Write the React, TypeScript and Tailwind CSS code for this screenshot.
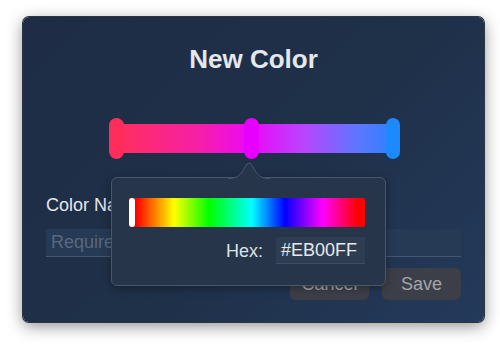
import React from 'react';

const font = { fontFamily: '"Liberation Sans", Arial, sans-serif' };

function GradientSlider() {
  return (
    <div className="relative mx-auto mt-[44px] h-[41px] w-[290px]">
      {/* track */}
      <div className="absolute left-[7px] right-[6px] top-[6px] h-[29px] rounded-[3px] bg-[linear-gradient(to_right,#ff2f5a_0%,#f61fa8_30%,#ec08f8_49%,#b845ff_68%,#5a78ff_88%,#2f80ff_100%)]" />
      {/* stops */}
      <div className="absolute left-0 top-0 h-[41px] w-[15px] rounded-full bg-[#ff2d5c]" />
      <div className="absolute left-[135px] top-0 h-[41px] w-[15px] rounded-full bg-[#e700ff]" />
      <div className="absolute left-[277px] top-0 h-[41px] w-[14px] rounded-full bg-[#1b8aff]" />
    </div>
  );
}

function HexPopover() {
  return (
    <div className="absolute left-[88px] top-[160px] w-[275px] rounded-[6px] border border-[#4b5669] bg-[#27354a] pb-[21px] pl-[17px] pr-[20px] pt-[20px] shadow-[0_2px_8px_rgba(0,0,0,0.35)]">
      {/* arrow */}
      <svg
        className="absolute left-[116px] top-[-18px]"
        width="42"
        height="19"
        viewBox="0 0 42 19"
      >
        <path d="M0 19 C9 19 13 15 17 7 Q21 -1 25 7 C29 15 33 19 42 19 Z" fill="#27354a" />
        <path d="M0 18.5 C9 18.5 13 15 17 7 Q21 -1 25 7 C29 15 33 18.5 42 18.5" fill="none" stroke="#4b5669" strokeWidth="1" />
      </svg>

      {/* hue strip */}
      <div className="relative h-[29px] rounded-[2px] bg-[linear-gradient(to_right,#ff0000_0%,#ff0000_3%,#ffff00_19%,#00ff00_34%,#00ffff_52%,#0000ff_66%,#ff00ff_82%,#ff0000_97%,#ff0000_100%)]">
        <div className="absolute left-0 top-0 h-[29px] w-[6px] rounded-[3px] bg-white" />
      </div>

      {/* hex field */}
      <div className="mt-[10px] flex items-center justify-end gap-[13px]">
        <span className="text-[18px] leading-6 text-[#dde1e7]">Hex:</span>
        <div className="flex h-[27px] w-[89px] items-center border-b border-[#3f4c61] bg-[#2f3d53] pl-[5px] text-[18px] text-[#e6e9ee]">
          #EB00FF
        </div>
      </div>
    </div>
  );
}

export default function App() {
  return (
    <div className="h-[345px] w-[500px] bg-white pl-[23px] pt-[17px]" style={font}>
      <div className="relative flex h-[305px] w-[461px] flex-col rounded-[6px] bg-[linear-gradient(135deg,#1e2d45_0%,#1f3049_55%,#243a5b_100%)] px-[23px] pb-[22px] pt-[27px] shadow-[0_0_0_1px_#2d3542,0_4px_16px_rgba(0,0,0,0.45)]">
        <h1 className="text-center text-[26px] font-bold leading-[30px] text-[#e4e7ec]">New Color</h1>

        <GradientSlider />

        <label className="mt-[35px] text-[18px] leading-6 text-[#e5e7eb]">Color Name</label>
        <div className="mt-[12px] flex h-[28px] items-center border-b border-[#46566e] bg-[#273a55] pl-[5px] text-[18px] text-[#57687f]">
          Required
        </div>

        <div className="mt-[11px] flex justify-end gap-[13px]">
          <button className="h-[32px] w-[79px] rounded-[6px] bg-[#3c3f47] text-[18px] text-[#a3a5aa]">Cancel</button>
          <button className="h-[32px] w-[79px] rounded-[6px] bg-[#3c3f47] text-[18px] text-[#a3a5aa]">Save</button>
        </div>

        <HexPopover />
      </div>
    </div>
  );
}
